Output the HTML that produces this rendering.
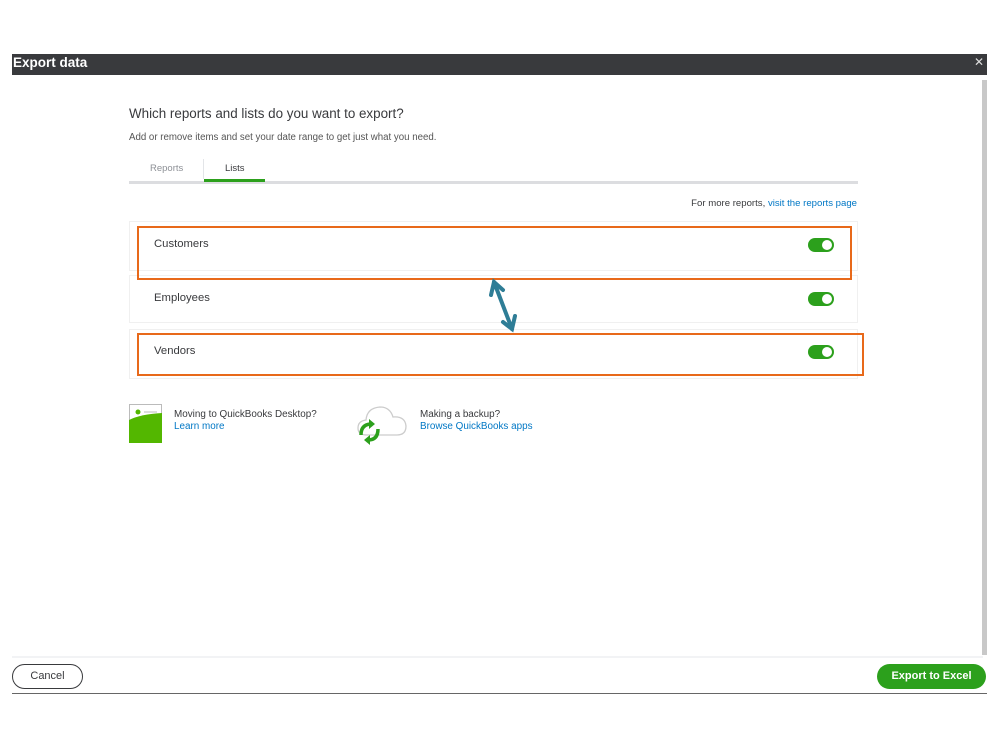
<!DOCTYPE html>
<html><head><meta charset="utf-8"><style>
*{margin:0;padding:0;box-sizing:border-box}
body{width:999px;height:749px;background:#fff;font-family:"Liberation Sans",sans-serif;position:relative;overflow:hidden;color:#393a3d}
.abs{position:absolute}
.hdr{left:12px;top:54px;width:975px;height:21px;background:#393a3d;color:#fff;font-weight:bold;font-size:13.5px;padding:1px 0 0 1px}
.x{right:15px;top:55px;color:#ddd;font-size:12px}
.sb{left:982px;top:80px;width:5px;height:575px;background:#c8c8c8}
.row{left:129px;width:729px;border:1px solid #f0f0f0;height:50px}
.lbl{left:154px;font-size:11.3px;color:#393a3d}
.tog{left:808px;width:26px;height:14px;border-radius:7px;background:#2ca01c}
.tog::after{content:"";position:absolute;right:2px;top:2px;width:10px;height:10px;border-radius:50%;background:#fff}
.box{border:2px solid #e8691a}
a{color:#0077c5;text-decoration:none}
</style></head><body>
<div class="abs hdr">Export data</div>
<div class="abs x">✕</div>
<div class="abs sb"></div>
<div class="abs" style="left:129px;top:106px;font-size:13.4px">Which reports and lists do you want to export?</div>
<div class="abs" style="left:129px;top:132px;font-size:9.7px;color:#555">Add or remove items and set your date range to get just what you need.</div>
<div class="abs" style="left:150px;top:163px;font-size:9.5px;color:#8d9096">Reports</div>
<div class="abs" style="left:203px;top:159px;width:1px;height:20px;background:#e3e5e8"></div>
<div class="abs" style="left:225px;top:163px;font-size:9.5px">Lists</div>
<div class="abs" style="left:129px;top:181px;width:729px;height:3px;background:#dcdde0"></div>
<div class="abs" style="left:204px;top:179px;width:61px;height:3px;background:#2ca01c"></div>
<div class="abs" style="right:142px;top:198px;font-size:9.6px">For more reports, <a>visit the reports page</a></div>
<div class="abs row" style="top:221px"></div>
<div class="abs row" style="top:275px;height:48px"></div>
<div class="abs row" style="top:329px"></div>
<div class="abs lbl" style="top:238px">Customers</div>
<div class="abs lbl" style="top:292px">Employees</div>
<div class="abs lbl" style="top:345px">Vendors</div>
<div class="abs tog" style="top:238px"></div>
<div class="abs tog" style="top:292px"></div>
<div class="abs tog" style="top:345px"></div>
<div class="abs box" style="left:137px;top:226px;width:715px;height:54px"></div>
<div class="abs box" style="left:137px;top:333px;width:727px;height:43px"></div>
<svg class="abs" style="left:485px;top:277px" width="36" height="58" viewBox="0 0 36 58"><g stroke="#2e7d96" stroke-width="4" fill="none" stroke-linecap="round"><line x1="9" y1="5" x2="27" y2="52"/><polyline points="6,18 9,5 18,13"/><polyline points="18,45 27,52 30,39"/></g></svg>
<svg class="abs" style="left:129px;top:404px" width="34" height="39" viewBox="0 0 34 39"><rect x="0.5" y="0.5" width="32" height="38" fill="#fff" stroke="#bbb"/><path d="M0 16 Q12 10 33 9 V39 H0Z" fill="#53b700"/><circle cx="9" cy="8" r="2.5" fill="#53b700"/><line x1="15" y1="8" x2="28" y2="8" stroke="#bbb"/></svg>
<div class="abs" style="left:174px;top:409px;font-size:9.9px;line-height:12px">Moving to QuickBooks Desktop?<br><a>Learn more</a></div>
<svg class="abs" style="left:357px;top:403px" width="52" height="42" viewBox="0 0 52 42"><path d="M10 32 Q1 32 1 25 Q1 18 9 17 Q10 5 23 4 Q33 4 36 14 Q48 13 49 23 Q49 32 40 32 Z" fill="none" stroke="#ccc" stroke-width="1.3"/><g stroke="#2ca01c" stroke-width="3.5" fill="none"><path d="M4 32 Q4 22 13 21"/><path d="M21 26 Q21 37 11 37"/></g><path d="M12 16 L18 21 L12 26Z M13 32 L7 37 L13 42Z" fill="#2ca01c"/></svg>
<div class="abs" style="left:420px;top:409px;font-size:9.9px;line-height:12px">Making a backup?<br><a>Browse QuickBooks apps</a></div>
<div class="abs" style="left:12px;top:656px;width:971px;height:2px;background:#f2f3f5"></div>
<div class="abs" style="left:12px;top:664px;width:71px;height:25px;border:1.5px solid #393a3d;border-radius:13px;font-size:11px;text-align:center;line-height:22px">Cancel</div>
<div class="abs" style="left:877px;top:664px;width:109px;height:25px;background:#2ca01c;border-radius:13px;color:#fff;font-weight:bold;font-size:11px;text-align:center;line-height:25px">Export to Excel</div>
<div class="abs" style="left:12px;top:693px;width:975px;height:1px;background:#666"></div>
</body></html>
